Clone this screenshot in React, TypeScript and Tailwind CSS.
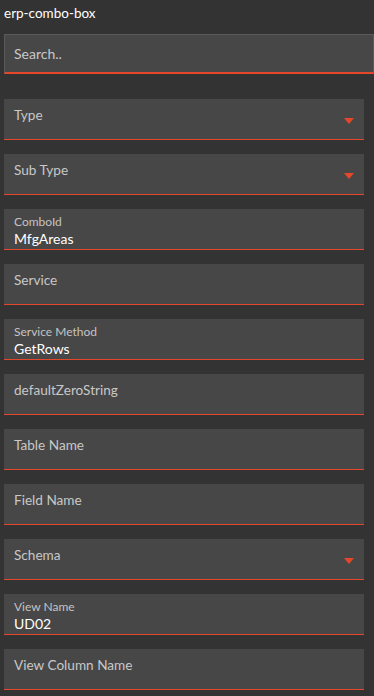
type FieldProps = {
  label: string;
  value?: string;
  dropdown?: boolean;
};

function Field({ label, value, dropdown }: FieldProps) {
  return (
    <div className="relative h-[41px] w-[360px] border-b border-[#e5472b] bg-[#474747]">
      {value ? (
        <div className="px-[10px] pt-[5px]">
          <div className="text-[12px] leading-[16px] text-[#c4c4c4]">{label}</div>
          <div className="text-[14px] leading-[18px] text-white">{value}</div>
        </div>
      ) : (
        <div className="px-[10px] pt-[6px] text-[13.6px] leading-[20px] text-[#c8c8c8]">{label}</div>
      )}
      {dropdown && (
        <svg className="absolute right-[10px] top-[19px]" width="10" height="6" viewBox="0 0 10 6">
          <polygon points="0,0 10,0 5,6" fill="#e5472b" />
        </svg>
      )}
    </div>
  );
}

export default function App() {
  const fields: FieldProps[] = [
    { label: 'Type', dropdown: true },
    { label: 'Sub Type', dropdown: true },
    { label: 'ComboId', value: 'MfgAreas' },
    { label: 'Service' },
    { label: 'Service Method', value: 'GetRows' },
    { label: 'defaultZeroString' },
    { label: 'Table Name' },
    { label: 'Field Name' },
    { label: 'Schema', dropdown: true },
    { label: 'View Name', value: 'UD02' },
    { label: 'View Column Name' },
  ];

  return (
    <div
      className="min-h-[696px] w-[374px] overflow-hidden bg-[#333333] px-[4px]"
      style={{ fontFamily: 'Lato, "Open Sans", sans-serif' }}
    >
      {/* Header */}
      <div className="pt-[4px] text-[13.5px] leading-[18px] text-white">erp-combo-box</div>

      {/* Search box */}
      <div className="mt-[12px] h-[40px] w-[370px] border border-b-2 border-[#5a5a5a] border-b-[#e5472b] bg-[#474747] px-[9px] pt-[9px] text-[14px] leading-[20px] text-[#c8c8c8]">
        Search..
      </div>

      {/* Fields */}
      <div className="mt-[25px] flex flex-col gap-[14px]">
        {fields.map((f) => (
          <Field key={f.label} {...f} />
        ))}
      </div>
    </div>
  );
}
